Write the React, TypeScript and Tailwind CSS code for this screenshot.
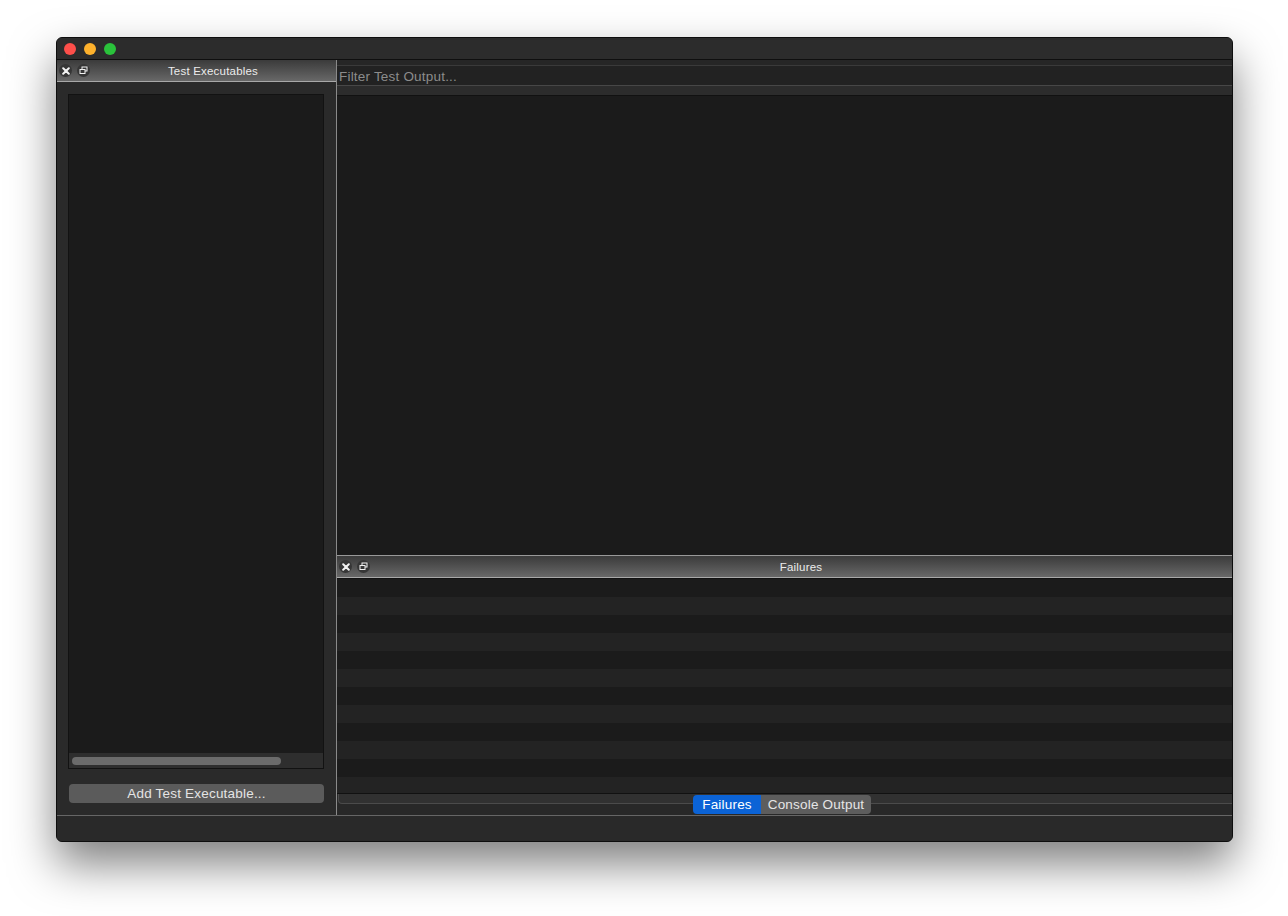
const font = { fontFamily: '"Liberation Sans", Arial, sans-serif' };

const DockButtons = () => (
  <div className="flex items-center gap-[5px] pl-[1px]">
    <div className="w-[13px] h-[13px] rounded-full bg-[#363636] flex items-center justify-center">
      <svg width="8" height="8" viewBox="0 0 8 8">
        <path d="M1.2 1.2 L6.8 6.8 M6.8 1.2 L1.2 6.8" stroke="#f2f2f2" strokeWidth="2" strokeLinecap="round" />
      </svg>
    </div>
    <div className="w-[13px] h-[13px] rounded-full bg-[#363636] flex items-center justify-center">
      <svg width="9" height="9" viewBox="0 0 9 9">
        <rect x="3" y="1" width="5" height="4" fill="none" stroke="#f2f2f2" strokeWidth="1" />
        <rect x="1" y="3.5" width="5" height="4" fill="#363636" stroke="#f2f2f2" strokeWidth="1" />
      </svg>
    </div>
  </div>
);

const DockHeader = ({ title }: { title: string }) => (
  <div className="h-[22px] flex items-center pl-[1px] bg-gradient-to-b from-[#3b3b3b] to-[#686868] border-b border-[#a8a8a8]">
    <DockButtons />
    <div className="flex-1 text-center text-[11.5px] tracking-[0.2px] text-[#ececec] leading-none pt-[2px]">{title}</div>
  </div>
);

export default function App() {
  const rows = Array.from({ length: 12 }, (_, i) => i);
  return (
    <div className="w-[1288px] h-[916px] bg-white pt-[37px] pl-[56px]" style={font}>
      <div className="w-[1177px] h-[805px] rounded-[6px] border border-[#0e0e0e] bg-[#282828] shadow-[0_22px_45px_rgba(0,0,0,0.5)] flex flex-col overflow-hidden">
        {/* title bar */}
        <div className="h-[21px] bg-[#2c2c2c] flex items-center gap-[8px] pl-[7px]">
          <div className="w-[12px] h-[12px] rounded-full bg-[#fd4f4a]" />
          <div className="w-[12px] h-[12px] rounded-full bg-[#fdb12c]" />
          <div className="w-[12px] h-[12px] rounded-full bg-[#2ac23b]" />
        </div>
        <div className="h-px bg-[#0f0f0f]" />

        <div className="flex-1 flex min-h-0">
          {/* left dock */}
          <div className="w-[279px] flex flex-col">
            <DockHeader title="Test Executables" />
            <div className="flex-1 bg-[#2a2a2a] pt-[12px] pb-[12px] pl-[11px] pr-[12px] flex flex-col">
              <div className="flex-1 border border-[#121212] bg-[#1b1b1b] flex flex-col justify-end">
                <div className="h-[15px] bg-[#2e2e2e] flex items-center pl-[3px]">
                  <div className="w-[209px] h-[8px] rounded-full bg-[#6b6b6b]" />
                </div>
              </div>
              <div className="mt-[15px] h-[19px] rounded-[4px] bg-[#5b5b5b] flex items-center justify-center pt-[2px] text-[13.5px] tracking-[0.2px] text-[#e4e4e4] ml-[1px]">
                Add Test Executable...
              </div>
            </div>
          </div>
          <div className="w-px bg-[#8a8a8a]" />

          {/* right area */}
          <div className="flex-1 flex flex-col min-w-0">
            <div className="h-[6px] bg-[#262626] border-b border-[#3a3a3a]" />
            <div className="h-[20px] bg-[#222222] border-b border-[#474747] flex items-center pl-[2px] pt-[3px] text-[13.5px] tracking-[0.2px] text-[#8c8c8c]">
              Filter Test Output...
            </div>
            <div className="h-[10px] bg-[#2c2c2c] border-b border-[#111111]" />
            <div className="flex-1 bg-[#1b1b1b]" />

            {/* failures dock */}
            <div className="border-t border-[#999999]">
              <DockHeader title="Failures" />
            </div>
            <div className="h-px bg-[#111111]" />
            <div className="h-[214px] overflow-hidden">
              {rows.map((i) => (
                <div key={i} className={i % 2 === 0 ? "h-[18px] bg-[#1b1b1b]" : "h-[18px] bg-[#232323]"} />
              ))}
            </div>
            <div className="h-px bg-[#111111]" />
            <div className="relative h-[21px] bg-[#282828]">
              <div className="h-[10px] ml-[1px] bg-[#313131] border-b border-l border-[#4b4b4b] rounded-bl-[4px]" />
              <div className="absolute inset-x-0 top-[1px] flex justify-center pr-[5px]">
                <div className="flex h-[19px] rounded-[4px] overflow-hidden text-[13.5px] tracking-[0.2px]">
                  <div className="w-[68px] bg-[#0b63d6] text-white flex items-center justify-center pt-[2px]">Failures</div>
                  <div className="w-[110px] bg-[#5d5d5d] text-[#e6e6e6] flex items-center justify-center pt-[2px]">Console Output</div>
                </div>
              </div>
            </div>
          </div>
        </div>

        <div className="h-px bg-[#666666]" />
        <div className="h-[25px] bg-[#292929]" />
      </div>
    </div>
  );
}
